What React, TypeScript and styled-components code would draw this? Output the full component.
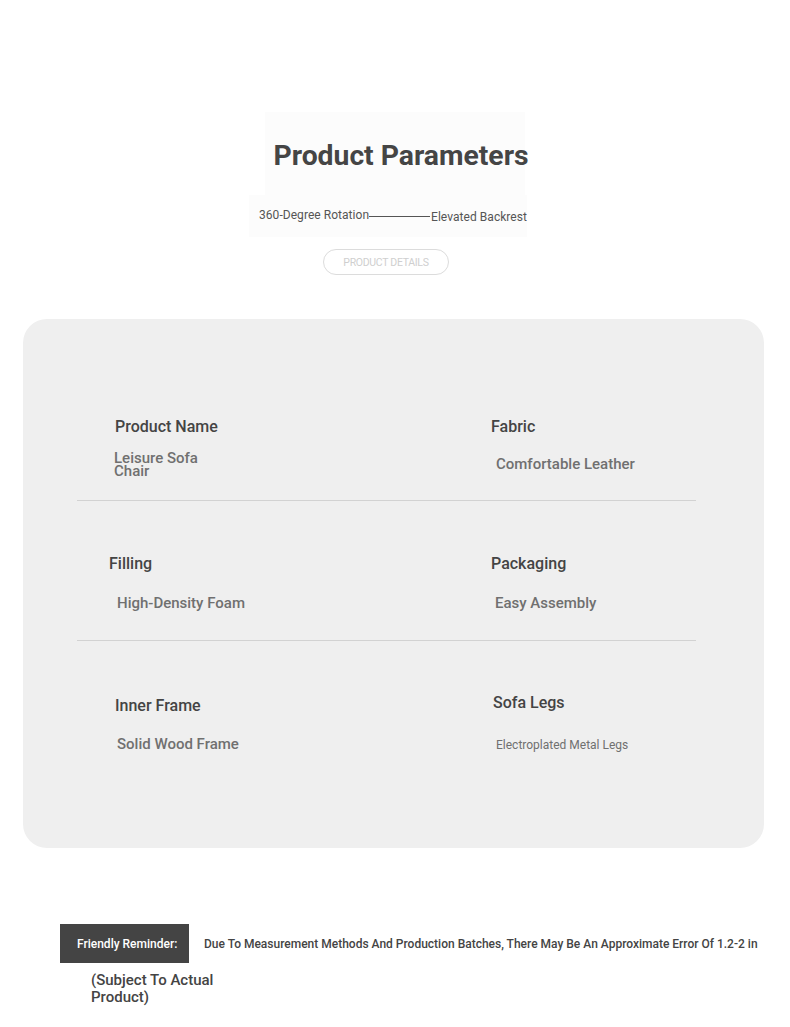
import React from "react";
import styled, { createGlobalStyle } from "styled-components";

const Global = createGlobalStyle`
  html, body { margin: 0; padding: 0; background: #ffffff; }
  body { font-family: Roboto, "Liberation Sans", Arial, sans-serif; color: #444; }
  * { box-sizing: border-box; }
`;

const Page = styled.div`
  width: 790px;
  height: 1027px;
  overflow: hidden;
  padding-top: 112px;
`;

const Header = styled.header`
  display: flex;
  flex-direction: column;
  align-items: center;
`;

const TitleBox = styled.div`
  width: 260px;
  height: 83px;
  background: #fcfcfc;
  display: flex;
  align-items: center;
  justify-content: center;
  padding-top: 4px;
`;

const Title = styled.h1`
  margin: 0 0 0 12px;
  font-size: 28.3px;
  font-weight: 700;
  color: #454545;
  white-space: nowrap;
`;

const SubRow = styled.div`
  display: flex;
  align-items: center;
  height: 42px;
  width: 278px;
  margin-left: -14px;
  background: #fcfcfc;
  padding-left: 10px;
`;

const SubText = styled.span<{ $dy?: number }>`
  font-size: 12px;
  color: #555;
  white-space: nowrap;
  letter-spacing: 0.05px;
  transform: translateY(${(p) => p.$dy ?? 0}px);
`;

const Line = styled.span`
  width: 61px;
  height: 1px;
  background: #555;
  margin-left: 0px;
  margin-right: 1px;
`;

const Pill = styled.div`
  margin-top: 12px;
  margin-left: -18px;
  width: 126px;
  height: 26px;
  border: 1px solid #dcdcdc;
  border-radius: 13px;
  display: flex;
  align-items: center;
  justify-content: center;
  font-size: 10.5px;
  color: #cfcfcf;
  letter-spacing: -0.3px;
`;

const Card = styled.section`
  margin: 44px 26px 0 23px;
  height: 529px;
  background: #efefef;
  border-radius: 24px;
  padding: 45px 68px 0 54px;
`;

const Row = styled.div<{ $pt: number; $pb: number; $last?: boolean }>`
  display: grid;
  grid-template-columns: 414px 205px;
  padding-top: ${(p) => p.$pt}px;
  padding-bottom: ${(p) => p.$pb}px;
  border-bottom: ${(p) => (p.$last ? "none" : "1.5px solid #d2d2d2")};
`;

const Cell = styled.div<{ $dx: number; $dy: number }>`
  display: flex;
  flex-direction: column;
  padding-left: ${(p) => p.$dx}px;
  margin-top: ${(p) => p.$dy}px;
`;

const Label = styled.div`
  font-size: 16px;
  line-height: 20px;
  font-weight: 500;
  color: #444;
  white-space: nowrap;
`;

const Value = styled.div<{ $dx: number; $gap: number; $small?: boolean; $wrap?: boolean }>`
  margin-left: ${(p) => p.$dx}px;
  margin-top: ${(p) => p.$gap}px;
  font-size: ${(p) => (p.$small ? 12 : 15)}px;
  line-height: ${(p) => (p.$wrap ? 13 : 18)}px;
  font-weight: ${(p) => (p.$small ? 400 : 500)};
  color: #707070;
  max-width: ${(p) => (p.$wrap ? "95px" : "none")};
  white-space: ${(p) => (p.$wrap ? "normal" : "nowrap")};
`;

const Footer = styled.footer`
  margin-top: 76px;
  padding-left: 60px;
`;

const NoteRow = styled.div`
  display: flex;
  align-items: center;
  gap: 15px;
`;

const Badge = styled.div`
  width: 129px;
  height: 39px;
  background: #444;
  color: #fff;
  font-size: 12px;
  font-weight: 500;
  display: flex;
  align-items: center;
  padding-left: 17px;
  white-space: nowrap;
`;

const NoteText = styled.div`
  font-size: 12px;
  font-weight: 500;
  color: #444;
  white-space: nowrap;
`;

const Subject = styled.div`
  margin: 9px 0 0 31px;
  width: 135px;
  font-size: 15px;
  line-height: 17px;
  font-weight: 500;
  color: #444;
`;

type Item = { label: string; value: string; ldx: number; ldy: number; vdx: number; gap: number; small?: boolean; wrap?: boolean };

const rows: { pt: number; pb: number; items: [Item, Item] }[] = [
  {
    pt: 53,
    pb: 22,
    items: [
      { label: "Product Name", value: "Leisure Sofa Chair", ldx: 38, ldy: 0, vdx: -1, gap: 15, wrap: true },
      { label: "Fabric", value: "Comfortable Leather", ldx: 0, ldy: 0, vdx: 5, gap: 18 },
    ],
  },
  {
    pt: 53,
    pb: 28,
    items: [
      { label: "Filling", value: "High-Density Foam", ldx: 32, ldy: 0, vdx: 8, gap: 20 },
      { label: "Packaging", value: "Easy Assembly", ldx: 0, ldy: 0, vdx: 4, gap: 20 },
    ],
  },
  {
    pt: 55,
    pb: 0,
    items: [
      { label: "Inner Frame", value: "Solid Wood Frame", ldx: 38, ldy: 0, vdx: 2, gap: 19 },
      { label: "Sofa Legs", value: "Electroplated Metal Legs", ldx: 2, ldy: -3, vdx: 3, gap: 23, small: true },
    ],
  },
];

export default function App() {
  return (
    <Page>
      <Global />
      <Header>
        <TitleBox>
          <Title>Product Parameters</Title>
        </TitleBox>
        <SubRow>
          <SubText $dy={-1}>360-Degree Rotation</SubText>
          <Line />
          <SubText $dy={1}>Elevated Backrest</SubText>
        </SubRow>
        <Pill>PRODUCT DETAILS</Pill>
      </Header>
      <Card>
        {rows.map((r, i) => (
          <Row key={i} $pt={r.pt} $pb={r.pb} $last={i === rows.length - 1}>
            {r.items.map((it) => (
              <Cell key={it.label} $dx={it.ldx} $dy={it.ldy}>
                <Label>{it.label}</Label>
                <Value $dx={it.vdx} $gap={it.gap} $small={it.small} $wrap={it.wrap}>
                  {it.value}
                </Value>
              </Cell>
            ))}
          </Row>
        ))}
      </Card>
      <Footer>
        <NoteRow>
          <Badge>Friendly Reminder:</Badge>
          <NoteText>
            Due To Measurement Methods And Production Batches, There May Be An Approximate Error Of 1.2-2 in
          </NoteText>
        </NoteRow>
        <Subject>(Subject To Actual Product)</Subject>
      </Footer>
    </Page>
  );
}
